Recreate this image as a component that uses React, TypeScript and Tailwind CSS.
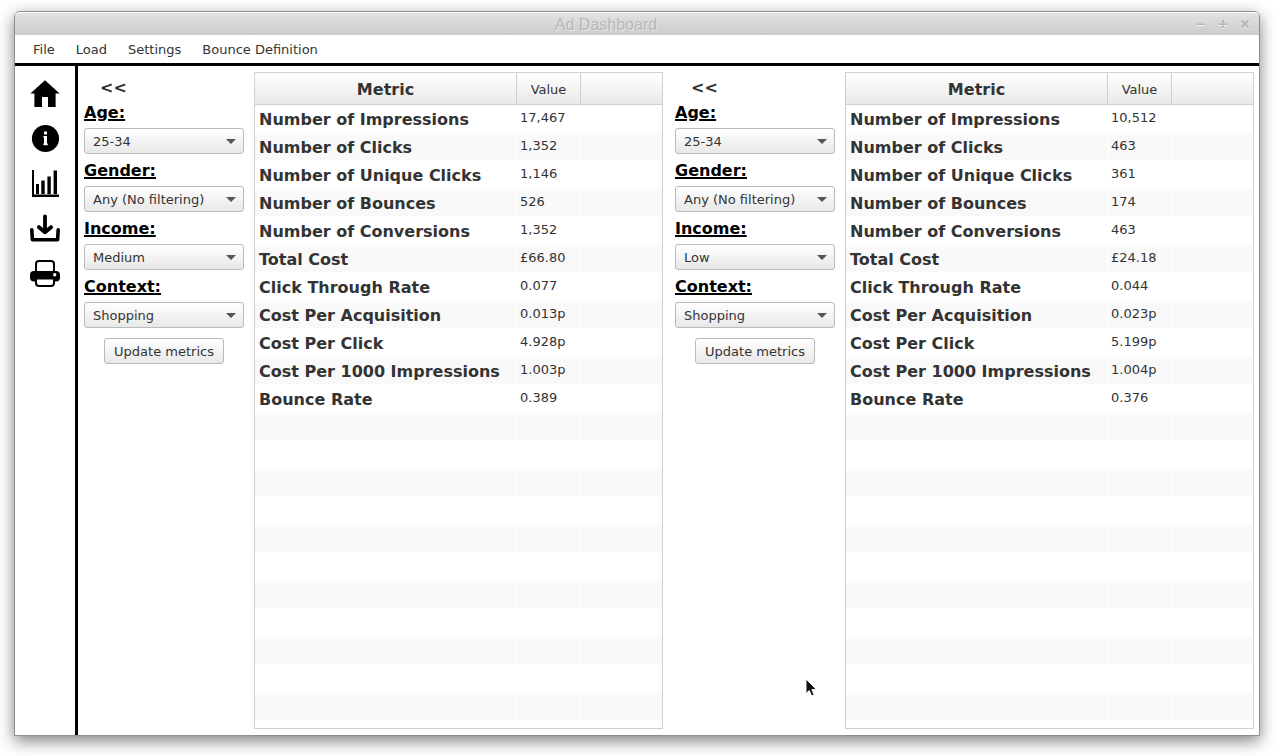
import { useId } from "react";

type Panel = { age: string; gender: string; income: string; context: string; values: string[] };

const metrics = [
  "Number of Impressions",
  "Number of Clicks",
  "Number of Unique Clicks",
  "Number of Bounces",
  "Number of Conversions",
  "Total Cost",
  "Click Through Rate",
  "Cost Per Acquisition",
  "Cost Per Click",
  "Cost Per 1000 Impressions",
  "Bounce Rate",
];

const TOTAL_ROWS = 22;

const panels: Panel[] = [
  {
    age: "25-34",
    gender: "Any (No filtering)",
    income: "Medium",
    context: "Shopping",
    values: ["17,467", "1,352", "1,146", "526", "1,352", "£66.80", "0.077", "0.013p", "4.928p", "1.003p", "0.389"],
  },
  {
    age: "25-34",
    gender: "Any (No filtering)",
    income: "Low",
    context: "Shopping",
    values: ["10,512", "463", "361", "174", "463", "£24.18", "0.044", "0.023p", "5.199p", "1.004p", "0.376"],
  },
];

function TitleBar() {
  return (
    <header className="relative flex h-[23px] items-center justify-center rounded-t-[5px] border-t border-white bg-linear-to-b from-[#e2e2e2] to-[#cbcbcb]">
      <h1 className="pt-px pr-[62px] font-['Liberation_Sans',sans-serif] text-base text-[#b8b8b8] [text-shadow:1px_1px_0_#e6e6e6]">
        Ad Dashboard
      </h1>
      <div className="absolute right-[9px] flex gap-3">
        <button aria-label="Minimise" className="size-[10px]">
          <svg viewBox="0 0 10 10" className="block size-[10px]">
            <path d="M1 6h8v1H1z" fill="#f0f0f0" />
            <path d="M1 4.5h8V6H1z" fill="#b4b4b4" />
          </svg>
        </button>
        <button aria-label="Maximise" className="size-[10px]">
          <svg viewBox="0 0 10 10" className="block size-[10px]">
            <path d="M1 6h8v1H1zM4 9h2v1H4z" fill="#f0f0f0" />
            <path d="M1 4.5h8V6H1zM4 1h2v2H4zM4 7.5h2V9H4z" fill="#b4b4b4" />
            <path d="M4.5 2v6h1V2z" fill="#b4b4b4" />
          </svg>
        </button>
        <button aria-label="Close" className="size-[10px]">
          <svg viewBox="0 0 10 10" className="block size-[10px]" fill="none" strokeWidth="1.8">
            <path d="M1.5 2.5l7 7M8.5 2.5l-7 7" stroke="#f0f0f0" />
            <path d="M1.5 1.5l7 7M8.5 1.5l-7 7" stroke="#b4b4b4" />
          </svg>
        </button>
      </div>
    </header>
  );
}

function Sidebar() {
  return (
    <nav className="flex w-[63px] shrink-0 flex-col items-center gap-[15px] border-r-3 border-black pt-[13px]">
      <button aria-label="Home" className="size-[30px]">
        <svg viewBox="0 0 30 30" className="block size-[30px]">
          <path d="M15 1.2L29.6 14.6H25.6V28H18V18H12V28H4.4V14.6H.4z" fill="#000" />
        </svg>
      </button>
      <button aria-label="Information" className="size-[30px]">
        <svg viewBox="0 0 30 30" className="block size-[30px]">
          <circle cx="15.5" cy="14.5" r="13.6" fill="#000" />
          <path d="M14 7.6h3v2.8h-3zM13.4 12H17v7.6h.8v1.6h-4.4v-1.6h.6v-6h-.6z" fill="#fff" />
        </svg>
      </button>
      <button aria-label="Charts" className="size-[30px]">
        <svg viewBox="0 0 30 30" className="block size-[30px]">
          <path d="M2 1h2v24.6h25V28H2zM6 15h3v10H6zM11.3 11.6h3.4V25h-3.4zM17.4 7.4h3.4V25h-3.4zM23.6 1.6H27V25h-3.4z" fill="#000" />
        </svg>
      </button>
      <button aria-label="Download" className="size-[30px]">
        <svg viewBox="0 0 30 30" className="block size-[30px]" fill="none" stroke="#000" strokeLinecap="round" strokeLinejoin="round">
          <path d="M15 2.5V17" strokeWidth="3.8" />
          <path d="M9 13.2L15 18.2L21 13.2" strokeWidth="4" />
          <path d="M1.8 15.8L2.4 25.7H27.6L28.2 15.8" strokeWidth="3.6" />
        </svg>
      </button>
      <button aria-label="Print" className="size-[30px]">
        <svg viewBox="0 0 30 30" className="block size-[30px]">
          <path d="M6 12V5Q6 2 9 2H21Q24 2 24 5V12" fill="#fff" stroke="#000" strokeWidth="2" />
          <path d="M4 12H26Q30 12 30 16V18.5Q30 22.5 26 22.5H4Q0 22.5 0 18.5V16Q0 12 4 12z" fill="#000" />
          <path d="M6 19.5H24V24Q24 27 21 27H9Q6 27 6 24z" fill="#fff" stroke="#000" strokeWidth="2" />
          <circle cx="24.7" cy="15.8" r="1.7" fill="#fff" />
        </svg>
      </button>
    </nav>
  );
}

function Filter({ label, value }: { label: string; value: string }) {
  const id = useId();
  return (
    <div className="flex flex-col">
      <label htmlFor={id} className="h-8 pt-[7px] text-base leading-5 font-bold text-black underline decoration-2 underline-offset-1">
        {label}
      </label>
      <div className="relative">
        <select
          id={id}
          defaultValue={value}
          className="block h-[26px] w-full appearance-none rounded-[3px] border border-[#bababa] bg-linear-to-b from-white to-[#e8e8e8] pt-px pl-2 text-[13px]"
        >
          <option>{value}</option>
        </select>
        <svg viewBox="0 0 10 5" className="pointer-events-none absolute top-[11px] right-2 h-[5px] w-[10px]">
          <path d="M0 0h10L5 5z" fill="#555" />
        </svg>
      </div>
    </div>
  );
}

function MetricsTable({ values }: { values: string[] }) {
  const head = "h-8 border-b border-[#d0d0d0] bg-linear-to-b from-white to-[#e9e9e9] p-0";
  return (
    <div className="min-w-0 flex-1 border border-[#d0d0d0]">
      <table className="w-full table-fixed border-separate border-spacing-0">
        <colgroup>
          <col className="w-[262px]" />
          <col className="w-16" />
          <col />
        </colgroup>
        <thead>
          <tr>
            <th className={`${head} border-r pt-[2px] text-base font-bold`}>Metric</th>
            <th className={`${head} border-r pt-[2px] text-[13px] font-normal`}>Value</th>
            <td className={head} />
          </tr>
        </thead>
        <tbody>
          {Array.from({ length: TOTAL_ROWS }, (_, i) => (
            <tr key={i} className="even:bg-[#f9f9f9]">
              <td className="h-7 border-r border-b border-white p-0 pt-[2px] pl-1 text-base leading-6 font-bold whitespace-nowrap">
                {metrics[i]}
              </td>
              <td className="h-7 border-r border-b border-white p-0 pt-px pl-[3px] align-top text-[13px] leading-6">{values[i]}</td>
              <td className="h-7 border-b border-white p-0" />
            </tr>
          ))}
        </tbody>
      </table>
    </div>
  );
}

function MetricsPanel({ panel }: { panel: Panel }) {
  return (
    <section className="flex min-w-0 flex-1 gap-[10px]">
      <form className="flex w-40 shrink-0 flex-col" onSubmit={(e) => e.preventDefault()}>
        <button type="button" aria-label="Collapse filters" className="ml-4 h-6 self-start pt-1 text-base leading-6 font-bold">
          &lt;&lt;
        </button>
        <Filter label="Age:" value={panel.age} />
        <Filter label="Gender:" value={panel.gender} />
        <Filter label="Income:" value={panel.income} />
        <Filter label="Context:" value={panel.context} />
        <button
          type="submit"
          className="mt-[10px] h-[26px] w-[120px] self-center rounded-[3px] border border-[#bababa] bg-linear-to-b from-white to-[#e8e8e8] pt-px text-[13px] whitespace-nowrap"
        >
          Update metrics
        </button>
      </form>
      <MetricsTable values={panel.values} />
    </section>
  );
}

export default function App() {
  return (
    <div className="flex min-h-screen bg-white pt-[11px] pr-5 pb-5 pl-[14px] font-['DejaVu_Sans',sans-serif] text-[#333]">
      <div className="relative flex min-w-0 flex-1 flex-col rounded-t-md border border-[#8e8e8e] bg-white shadow-[0_5px_16px_rgba(0,0,0,0.5)]">
        <TitleBar />
        <nav className="flex h-[31px] items-center gap-[21px] border-b-3 border-black pt-[2px] pl-[18px] text-[13px]">
          <button>File</button>
          <button>Load</button>
          <button>Settings</button>
          <button>Bounce Definition</button>
        </nav>
        <main className="flex flex-1">
          <Sidebar />
          <div className="flex min-w-0 flex-1 gap-3 py-[6px] pr-[5px] pl-[6px]">
            {panels.map((p, i) => (
              <MetricsPanel key={i} panel={p} />
            ))}
          </div>
        </main>
        <svg viewBox="0 0 12 19" className="pointer-events-none absolute top-[666px] left-[790px] h-[19px] w-3">
          <path d="M1 1V15.5L4.3 12.5L6.6 18L9.2 17L6.9 11.6H11.5z" fill="#111" stroke="#fff" strokeWidth="1" />
        </svg>
      </div>
    </div>
  );
}
